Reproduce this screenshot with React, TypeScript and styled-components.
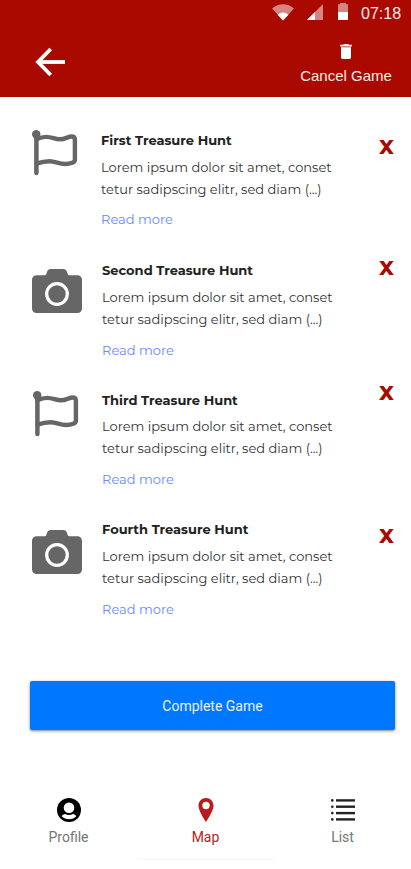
import React from "react";
import styled, { createGlobalStyle } from "styled-components";

const RED = "#aa0900";

const GlobalStyle = createGlobalStyle`
  * { box-sizing: border-box; }
  body { margin: 0; background: #fff; }
  svg { display: block; flex: none; }
  button { border: 0; padding: 0; background: none; cursor: pointer; }
`;

const Screen = styled.div`
  width: 411px;
  height: 869px;
  display: flex;
  flex-direction: column;
  overflow: hidden;
  background: #fff;
`;

const Header = styled.header`
  height: 97px;
  flex: none;
  background: ${RED};
  color: #fff;
`;

const StatusBar = styled.div`
  height: 26px;
  padding: 3px 10px 0 0;
  display: flex;
  justify-content: flex-end;
`;

const Clock = styled.span`
  width: 40px;
  margin-left: 13px;
  font: 16px/21px "Liberation Sans", Arial, sans-serif;
  color: #fbe9e8;
`;

const Toolbar = styled.div`
  height: 71px;
  padding: 16px 19px 0 35px;
  display: flex;
  justify-content: space-between;
`;

const BackButton = styled.button`
  height: 40px;
  display: flex;
  align-items: center;
`;

const CancelButton = styled.button`
  display: flex;
  flex-direction: column;
  align-items: center;
  width: 92px;
  height: 50px;
  color: #fbe9e8;
  white-space: nowrap;
  font: 15px/18px "Liberation Sans", Arial, sans-serif;

  svg { margin: -1px 0 5px; }
`;

const Hunts = styled.main`
  flex: none;
  height: 555px;
  padding-top: 29px;
`;

const HuntRow = styled.article`
  height: 130px;
  padding: 0 16px 0 32px;
  display: grid;
  grid-template-columns: 69px 1fr 17px;
`;

const IconSlot = styled.div<{ $top: number; $shift: number }>`
  padding: ${(p) => p.$top}px 0 0 ${(p) => p.$shift}px;
`;

const HuntText = styled.div<{ $top: number; $shift: number }>`
  padding: ${(p) => p.$top}px 0 0 ${(p) => p.$shift}px;
  font-family: Montserrat, Inter, sans-serif;
  font-size: 13px;
  line-height: 22px;
  color: #333;
  white-space: nowrap;
`;

const Title = styled.h2<{ $gap: number }>`
  margin: 0;
  font-size: 13px;
  line-height: 22px;
  font-weight: 700;
  color: #222;
  padding-bottom: ${(p) => p.$gap}px;
`;

const TextLine = styled.span`
  display: block;
`;

const ReadMore = styled.a<{ $gap: number }>`
  display: block;
  margin-top: ${(p) => p.$gap}px;
  color: #6689ff;
`;

const RemoveButton = styled.button<{ $top: number }>`
  align-self: start;
  width: 17px;
  height: 20px;
  margin-top: ${(p) => p.$top}px;
  font: 700 25px/20px Montserrat, "Open Sans", sans-serif;
  color: ${RED};
`;

const CompleteButton = styled.button`
  flex: none;
  width: 365px;
  height: 49px;
  margin: 29px 0 0 30px;
  border-radius: 2px;
  background: #0077ff;
  box-shadow: 0 1px 3px rgba(0, 0, 0, 0.5);
  color: #e9f3ff;
  font: 14px/50px Roboto, sans-serif;
`;

const Nav = styled.nav`
  margin-top: 68px;
  height: 71px;
  display: grid;
  grid-template-columns: repeat(3, 137px);
`;

const NavItem = styled.button<{ $active?: boolean }>`
  height: 62px;
  display: flex;
  flex-direction: column;
  align-items: center;
  font: 14px/20px Roboto, sans-serif;
  color: ${(p) => (p.$active ? "#b91c1c" : "#757575")};
  border-bottom: 1px solid ${(p) => (p.$active ? "#f6f6f6" : "transparent")};

  svg { margin-bottom: 5px; }
`;

const WifiIcon = () => (
  <svg width="24" height="18" viewBox="0 0 24 18">
    <path d="M1 5.6C7-.2 17-.2 23 5.6L12 17.5z" fill="#fff" opacity=".5" />
    <path d="M6.6 11.7Q12 7.5 17.4 11.7L12 17.5z" fill="#fff" />
  </svg>
);

const SignalIcon = () => (
  <svg width="16" height="16" viewBox="0 0 16 16">
    <path d="M16 0v16H0z" fill="#fff" opacity=".5" />
    <path d="M8 8v8H0z" fill="#fff" />
  </svg>
);

const BatteryIcon = () => (
  <svg width="10" height="17" viewBox="0 0 10 17">
    <path d="M2 0h6v1.2h2V9H0V1.2h2z" fill="#fff" opacity=".5" />
    <path d="M0 9h10v8H0z" fill="#fff" />
  </svg>
);

const Status = styled.span<{ $left: number; $top: number }>`
  margin: ${(p) => p.$top}px 0 0 ${(p) => p.$left}px;
`;

const BackIcon = () => (
  <svg width="32" height="32" viewBox="0 0 32 32" fill="none" stroke="#fff">
    <path d="M30 16H4" strokeWidth="3.8" />
    <path d="M15.7 3 3 16l12.7 13" strokeWidth="3.8" />
  </svg>
);

const TrashIcon = () => (
  <svg width="20" height="21" viewBox="0 0 24 24" fill="#fff">
    <path d="M6 19c0 1.1.9 2 2 2h8c1.1 0 2-.9 2-2V7H6v12zM19 4h-3.5l-1-1h-5l-1 1H5v2h14V4z" />
  </svg>
);

const FlagIcon = () => (
  <svg width="46" height="46" viewBox="0 0 46 46" fill="none" stroke="#666" strokeLinecap="round" strokeLinejoin="round">
    <circle cx="4.2" cy="4.2" r="4.2" fill="#666" stroke="none" />
    <path d="M4.4 4v39" strokeWidth="4.5" />
    <path
      d="M4.5 9.2C16 3.8 21 9.3 27.500 9.3c6 0 8.500-2.800 12-2.800 2.400 0 3.400 1.200 3.400 3.200v20c0 1.900-1 2.400-2.600 3-10.500 4-15-1.500-22.800-1.500-5.500 0-9 1.100-13 2.500"
      strokeWidth="4.4"
    />
  </svg>
);

const CameraIcon = () => (
  <svg width="50" height="44" viewBox="0 0 50 44">
    <path
      fill="#666"
      d="M4.5 6.2h8.2c1.5 0 1.7-1.5 2.2-3C15.6 1 16.7 0 18.8 0h12.4c2.1 0 3.2 1 3.9 3.2.5 1.5.7 3 2.2 3h8.2A4.5 4.5 0 0 1 50 10.7v28.8a4.5 4.5 0 0 1-4.5 4.5h-41A4.5 4.5 0 0 1 0 39.5V10.7A4.5 4.5 0 0 1 4.5 6.2z"
    />
    <circle cx="25" cy="25" r="10.3" fill="none" stroke="#fff" strokeWidth="3.2" />
  </svg>
);

const ProfileIcon = () => (
  <svg width="24" height="24" viewBox="0 0 24 24">
    <circle cx="12" cy="12" r="12" fill="#000" />
    <circle cx="12" cy="9.7" r="5.3" fill="#fff" />
    <path d="M4.7 18.2Q5.5 16.2 8 15.9Q12 18 16 15.9Q18.5 16.2 19.3 18.2Q16.5 21.2 12 21.2T4.7 18.2z" fill="#fff" />
  </svg>
);

const PinIcon = () => (
  <svg width="16" height="24" viewBox="0 0 16 24">
    <path
      fill="#b91c1c"
      fillRule="evenodd"
      d="M8 0C3.7 0 .5 3.3.5 7.7.5 13 8 24 8 24s7.5-11 7.5-16.3C15.5 3.3 12.3 0 8 0zm0 11.2a3.7 3.7 0 1 1 0-7.4 3.7 3.7 0 0 1 0 7.4z"
    />
  </svg>
);

const ListIcon = () => (
  <svg width="24" height="24" viewBox="0 0 24 24" stroke="#222" strokeWidth="2.4">
    {[2.4, 8.7, 15.1, 21.4].map((y) => (
      <g key={y}>
        <circle cx="1.3" cy={y} r="1.3" fill="#222" stroke="none" />
        <path d={`M5 ${y}h19`} />
      </g>
    ))}
  </svg>
);

type Hunt = {
  title: string;
  kind: "flag" | "camera";
  iconTop: number;
  iconShift: number;
  textTop: number;
  textShift: number;
  gap: number;
  linkGap: number;
  removeTop: number;
};

const hunts: Hunt[] = [
  { title: "First Treasure Hunt", kind: "flag", iconTop: 4, iconShift: 0, textTop: 3, textShift: 0, gap: 5, linkGap: 8, removeTop: 9 },
  { title: "Second Treasure Hunt", kind: "camera", iconTop: 13, iconShift: 0, textTop: 3, textShift: 1, gap: 5, linkGap: 9, removeTop: 0 },
  { title: "Third Treasure Hunt", kind: "flag", iconTop: 5, iconShift: 1, textTop: 3, textShift: 1, gap: 4, linkGap: 9, removeTop: -5 },
  { title: "Fourth Treasure Hunt", kind: "camera", iconTop: 14, iconShift: 0, textTop: 2, textShift: 1, gap: 5, linkGap: 9, removeTop: 8 },
];

export default function App() {
  return (
    <Screen>
      <GlobalStyle />
      <Header>
        <StatusBar>
          <Status $left={0} $top={0}><WifiIcon /></Status>
          <Status $left={12} $top={1}><SignalIcon /></Status>
          <Status $left={15} $top={0}><BatteryIcon /></Status>
          <Clock>07:18</Clock>
        </StatusBar>
        <Toolbar>
          <BackButton aria-label="Back"><BackIcon /></BackButton>
          <CancelButton><TrashIcon />Cancel Game</CancelButton>
        </Toolbar>
      </Header>

      <Hunts>
        {hunts.map((h) => (
          <HuntRow key={h.title}>
            <IconSlot $top={h.iconTop} $shift={h.iconShift}>
              {h.kind === "flag" ? <FlagIcon /> : <CameraIcon />}
            </IconSlot>
            <HuntText $top={h.textTop} $shift={h.textShift}>
              <Title $gap={h.gap}>{h.title}</Title>
              <TextLine>Lorem ipsum dolor sit amet, conset</TextLine>
              <TextLine>tetur sadipscing elitr, sed diam (...)</TextLine>
              <ReadMore $gap={h.linkGap}>Read more</ReadMore>
            </HuntText>
            <RemoveButton $top={h.removeTop}>x</RemoveButton>
          </HuntRow>
        ))}
      </Hunts>

      <CompleteButton>Complete Game</CompleteButton>

      <Nav>
        <NavItem><ProfileIcon />Profile</NavItem>
        <NavItem $active><PinIcon />Map</NavItem>
        <NavItem><ListIcon />List</NavItem>
      </Nav>
    </Screen>
  );
}
